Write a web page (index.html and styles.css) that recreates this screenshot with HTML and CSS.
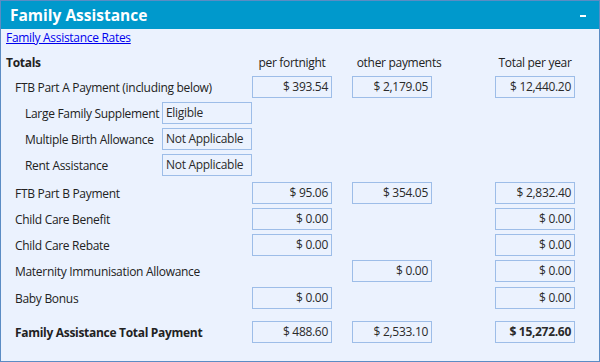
FILE: index.html
```html
<!DOCTYPE html>
<html lang="en">

<head>
  <meta charset="UTF-8">
  <meta name="viewport" content="width=device-width, initial-scale=1.0">
  <title>Family Assistance</title>
  <link rel="stylesheet" href="styles.css">
</head>

<body>
  <div id="panel">
    <div class="panel-head">
      <h1>Family Assistance</h1>
      <span class="collapse-btn"></span>
    </div>
    <div class="panel-body">
      <div class="link-line"><a href="#">Family Assistance Rates</a></div>

      <div class="row heads">
        <div class="label bold">Totals</div>
        <div class="col-head c1">per fortnight</div>
        <div class="col-head c2 other">other payments</div>
        <div class="col-head c3">Total per year</div>
      </div>

      <div class="rows">
        <div class="row">
          <div class="label">FTB Part A Payment (including below)</div>
          <div class="box c1">$ 393.54</div>
          <div class="box c2">$ 2,179.05</div>
          <div class="box c3">$ 12,440.20</div>
        </div>
        <div class="row">
          <div class="label sub">
            <span class="sub-name">Large Family Supplement</span>
            <span class="box status">Eligible</span>
          </div>
        </div>
        <div class="row">
          <div class="label sub">
            <span class="sub-name">Multiple Birth Allowance</span>
            <span class="box status">Not Applicable</span>
          </div>
        </div>
        <div class="row">
          <div class="label sub">
            <span class="sub-name">Rent Assistance</span>
            <span class="box status">Not Applicable</span>
          </div>
        </div>
        <div class="row part-b">
          <div class="label">FTB Part B Payment</div>
          <div class="box c1">$ 95.06</div>
          <div class="box c2">$ 354.05</div>
          <div class="box c3">$ 2,832.40</div>
        </div>
        <div class="row">
          <div class="label">Child Care Benefit</div>
          <div class="box c1">$ 0.00</div>
          <div class="box c3">$ 0.00</div>
        </div>
        <div class="row">
          <div class="label">Child Care Rebate</div>
          <div class="box c1">$ 0.00</div>
          <div class="box c3">$ 0.00</div>
        </div>
        <div class="row">
          <div class="label">Maternity Immunisation Allowance</div>
          <div class="box c2">$ 0.00</div>
          <div class="box c3">$ 0.00</div>
        </div>
        <div class="row baby">
          <div class="label">Baby Bonus</div>
          <div class="box c1">$ 0.00</div>
          <div class="box c3">$ 0.00</div>
        </div>
        <div class="row total">
          <div class="label bold">Family Assistance Total Payment</div>
          <div class="box c1">$ 488.60</div>
          <div class="box c2">$ 2,533.10</div>
          <div class="box c3 bold">$ 15,272.60</div>
        </div>
      </div>
    </div>
  </div>
</body>

</html>
```

FILE: styles.css
```css
body {
  margin: 0;
  font-family: "Open Sans", "Noto Sans", sans-serif;
  font-size: 12px;
  letter-spacing: -0.3px;
  color: #222;
}

#panel {
  width: 598px;
  height: 360px;
  border: 1px solid #5b8cc4;
  background: #ebf2fe;
}

.panel-head {
  display: flex;
  justify-content: space-between;
  align-items: center;
  height: 28px;
  padding: 0 13px 0 9px;
  background: #0099cc;
}

.panel-head h1 {
  margin: 0;
  font-size: 15.5px;
  font-weight: bold;
  letter-spacing: 0;
  color: #fff;
}

.collapse-btn {
  width: 6px;
  height: 2px;
  margin-top: 2px;
  background: #fff;
}

.panel-body {
  padding: 1px 24px 0 5px;
}

.link-line {
  height: 16px;
  line-height: 16px;
}

.link-line a {
  color: #0000ee;
}

.row {
  display: grid;
  grid-template-columns: 246px 80px 100px 143px;
  align-items: center;
  height: 22px;
}

.heads {
  height: 16px;
  margin-top: 8px;
}

.rows {
  display: flex;
  flex-direction: column;
  gap: 4px;
  margin-top: 6px;
}

.part-b {
  margin-top: 2px;
}

.baby {
  margin-top: 1px;
}

.total {
  margin-top: 8px;
}

.label {
  grid-column: 1;
  white-space: nowrap;
}

.rows .label {
  padding-left: 9px;
}

.rows .label.sub {
  display: flex;
  align-items: center;
  padding-left: 19px;
}

.sub-name {
  width: 137px;
}

.bold {
  font-weight: bold;
}

.c1 {
  grid-column: 2;
}

.c2 {
  grid-column: 3;
  justify-self: end;
}

.c3 {
  grid-column: 4;
  justify-self: end;
}

.box {
  box-sizing: border-box;
  width: 80px;
  height: 22px;
  line-height: 20px;
  padding: 0 3px;
  border: 1px solid #9dbde8;
  color: #2a2a2a;
  text-align: right;
  white-space: nowrap;
}

.box.status {
  width: 90px;
  text-align: left;
}

.col-head {
  width: 80px;
  text-align: center;
  white-space: nowrap;
}

.col-head.other {
  display: flex;
  justify-content: center;
  padding-left: 14px;
  box-sizing: border-box;
}
```
